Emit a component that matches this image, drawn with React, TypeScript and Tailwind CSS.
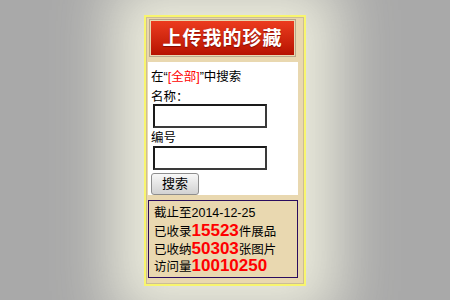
import React from 'react'

const FONT = { fontFamily: '"Liberation Sans", "Noto Sans CJK SC", sans-serif' }

const Input = () => (
  <div className="ml-[2px] w-[114px] h-[24px] border-2 border-t-[#1a1a1a] border-l-[#1a1a1a] border-r-[#3a3a3a] border-b-[#3a3a3a] bg-white" />
)

export default function App() {
  return (
    <div
      className="w-[450px] h-[300px] bg-[#a9a9a9] flex justify-center pt-[15px] overflow-hidden text-black"
      style={FONT}
    >
      <div className="w-[162px] h-[271px] border-2 border-[#f8f56e] bg-[#e9d8b0] shadow-[0_0_55px_32px_rgba(238,238,222,0.95)]">
        <div className="h-full border border-[#cdbd97] flex flex-col">
          {/* Upload button */}
          <div className="ml-[2px] mt-[1px] w-[147px] h-[38px] border border-[#b7a88c] p-[1px]">
            <div className="h-full bg-gradient-to-b from-[#ec3b1e] to-[#b71100] flex items-center justify-center">
              <span className="text-white font-bold text-[19px] leading-none tracking-[1px] [text-shadow:0_1px_1px_rgba(90,0,0,0.6)]">
                上传我的珍藏
              </span>
            </div>
          </div>

          {/* Search */}
          <div className="ml-[1px] mt-[5px] w-[150px] h-[133px] bg-white pl-[3px] pt-[8px] text-[12.5px]">
            <div className="h-[15px] leading-[15px] whitespace-nowrap">
              在“<span className="text-[#ff0000]">[全部]</span>”中搜索
            </div>
            <div className="mt-[5px] h-[14px] leading-[14px]">名称：</div>
            <Input />
            <div className="mt-[2px] h-[16px] leading-[16px]">编号</div>
            <Input />
            <button className="mt-[3px] w-[48px] h-[22px] rounded-[3px] border border-[#8e8e8e] bg-gradient-to-b from-[#f8f8f8] to-[#d2d2d2] text-[13px] leading-[20px] text-black">
              搜索
            </button>
          </div>

          {/* Stats */}
          <div className="ml-[1px] mt-[5px] w-[150px] h-[78px] border border-[#2a0c5e] pl-[5px] pt-[5px] text-[12.5px] whitespace-nowrap">
            <div className="h-[15px] leading-[15px]">截止至2014-12-25</div>
            <div className="h-[17.5px] leading-[17.5px] mt-[1px]">
              已收录<span className="text-[#ff0000] font-bold text-[17px] leading-none">15523</span>件展品
            </div>
            <div className="h-[17.5px] leading-[17.5px]">
              已收纳<span className="text-[#ff0000] font-bold text-[17px] leading-none">50303</span>张图片
            </div>
            <div className="h-[17.5px] leading-[17.5px]">
              访问量<span className="text-[#ff0000] font-bold text-[17px] leading-none">10010250</span>
            </div>
          </div>
        </div>
      </div>
    </div>
  )
}
